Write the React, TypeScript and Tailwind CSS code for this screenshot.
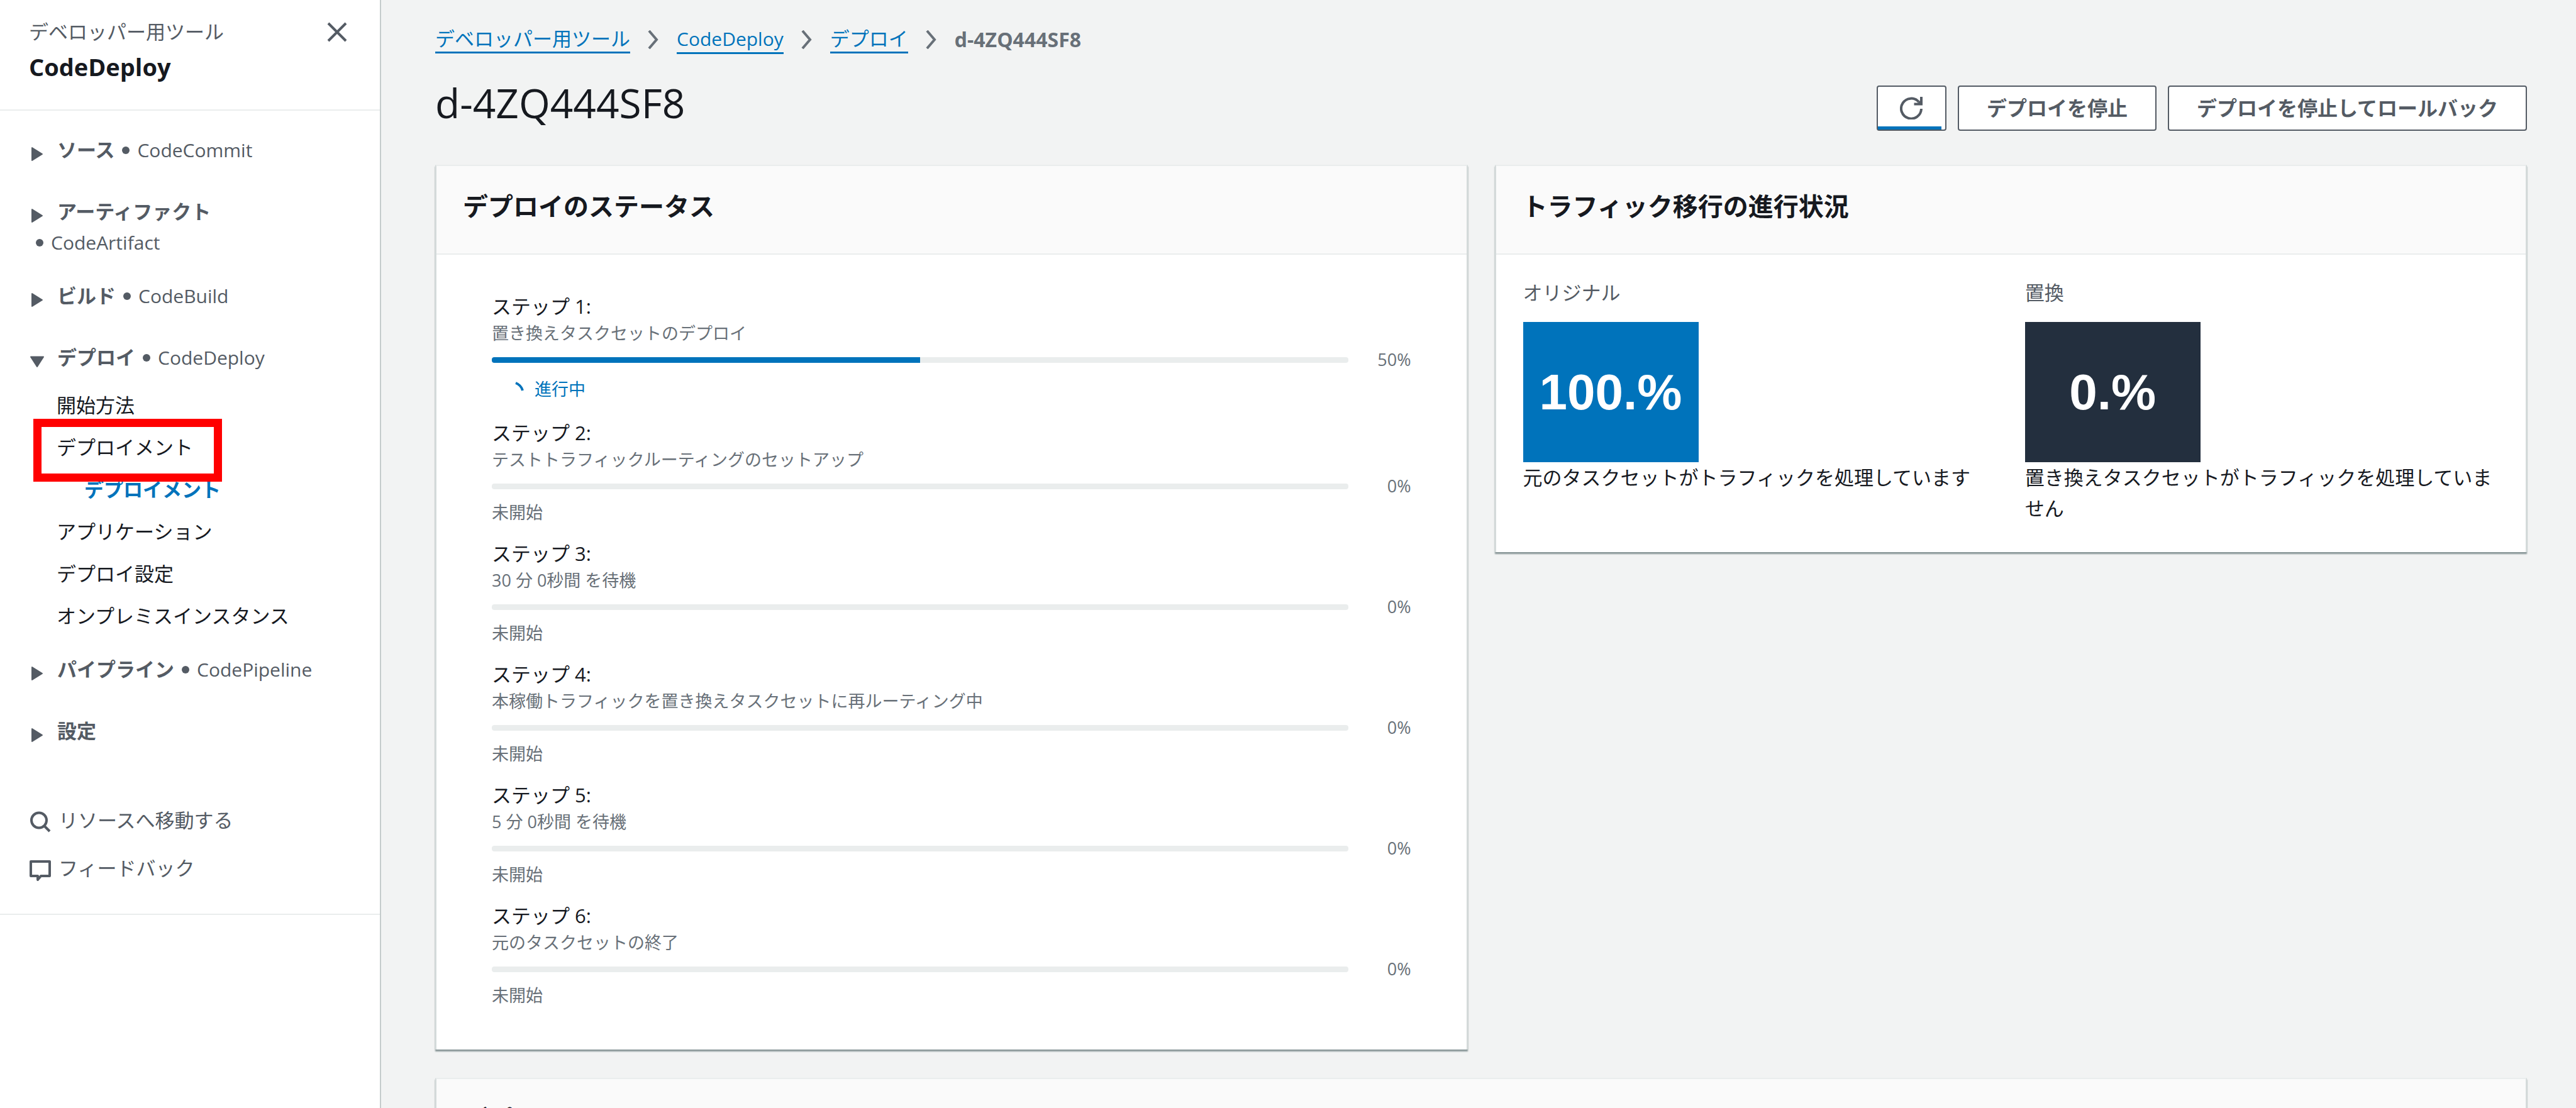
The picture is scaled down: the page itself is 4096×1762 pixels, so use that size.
import React from 'react';

function Caret({ open }: { open?: boolean }) {
  return (
    <svg viewBox="0 0 24 24" className="mt-3 h-6 w-6 shrink-0" fill="#545b64" stroke="#545b64" strokeWidth="2" strokeLinejoin="round" aria-hidden="true">
      {open ? <path d="M2 4.500h20L12 20z" /> : <path d="M4 2v20l16-10z" />}
    </svg>
  );
}

function Group({ label, service, open }: { label: string; service?: string; open?: boolean }) {
  return (
    <button type="button" className="flex h-[49px] items-center text-left">
      <Caret open={open} />
      <span className="ml-5 text-[31px] font-bold">{label}</span>
      {service && (
        <>
          <Dot />
          <span className="text-[30px]">{service}</span>
        </>
      )}
    </button>
  );
}

function Dot() {
  return <span className="mx-3 h-3 w-3 rounded-full bg-[#545b64]" />;
}

const links = [
  { label: '開始方法' },
  { label: 'デプロイメント', marked: true },
  { label: 'デプロイメント', current: true },
  { label: 'アプリケーション' },
  { label: 'デプロイ設定' },
  { label: 'オンプレミスインスタンス' },
];

function Sidebar() {
  return (
    <aside className="w-[606px] shrink-0 border-r-2 border-[#c5cccc] bg-white text-[#545b64]">
      <header className="flex h-[176px] items-start justify-between border-b-2 border-[#eaeded] pl-[46px] pr-[52px] pt-[26px]">
        <div>
          <p className="text-[31px] leading-[49px]">デベロッパー用ツール</p>
          <h2 className="mt-1 text-[38px] font-bold leading-[54px] text-[#16191f]">CodeDeploy</h2>
        </div>
        <button type="button" aria-label="閉じる" className="mt-[9px]">
          <svg viewBox="0 0 32 32" className="h-8 w-8" fill="none" stroke="#545b64" strokeWidth="4" aria-hidden="true">
            <path d="M2 2l28 28M30 2L2 30" />
          </svg>
        </button>
      </header>
      <nav className="border-b-2 border-[#eaeded] pb-12 pl-[47px] pt-[38px] leading-[49px]">
        <Group label="ソース" service="CodeCommit" />
        <div className="mt-[49px]">
          <Group label="アーティファクト" />
          <div className="-ml-0.5 flex items-center">
            <Dot />
            <span className="text-[30px]">CodeArtifact</span>
          </div>
        </div>
        <div className="mt-9">
          <Group label="ビルド" service="CodeBuild" />
        </div>
        <div className="mt-[49px]">
          <Group label="デプロイ" service="CodeDeploy" open />
        </div>
        <ul className="mb-[27px] mt-[18px] text-[31px] text-[#16191f]">
          {links.map((link, i) => (
            <li key={i} className={link.current ? 'relative ml-[87px] h-[67px] py-[9px]' : 'relative ml-[43px] h-[67px] py-[9px]'}>
              <a href="#" className={link.current ? 'font-bold text-[#0073bb]' : ''}>{link.label}</a>
              {link.marked && (
                <span className="absolute -left-[37px] -top-[12px] z-10 h-[100px] w-[300px] border-[13px] border-[#ff0000]" />
              )}
            </li>
          ))}
        </ul>
        <Group label="パイプライン" service="CodePipeline" />
        <div className="mt-[49px]">
          <Group label="設定" />
        </div>
        <button type="button" className="mt-[93px] flex items-center gap-3 text-[31px]">
          <svg viewBox="0 0 34 34" className="mt-1 h-[34px] w-[34px]" fill="none" stroke="#545b64" strokeWidth="4" aria-hidden="true">
            <circle cx="15" cy="14.500" r="12" />
            <path d="M23 23l9 9" />
          </svg>
          リソースへ移動する
        </button>
        <button type="button" className="mt-[27px] flex items-center gap-3 text-[31px]">
          <svg viewBox="0 0 34 34" className="mt-2 h-[34px] w-[34px]" fill="none" stroke="#545b64" strokeWidth="4" strokeLinejoin="round" aria-hidden="true">
            <path d="M2 2h30v23H18l-5 6v-6H2z" />
          </svg>
          フィードバック
        </button>
      </nav>
    </aside>
  );
}

function Chevron() {
  return (
    <svg viewBox="0 0 20 30" className="mx-[27px] h-[30px] w-5" fill="none" stroke="#687078" strokeWidth="4" aria-hidden="true">
      <path d="M3 1l12 14L3 29" />
    </svg>
  );
}

function Crumb({ children }: { children: React.ReactNode }) {
  return (
    <a href="#" className="border-b-3 border-[#0073bb] leading-[42px] text-[#0073bb]">
      {children}
    </a>
  );
}

function Card({ title, className, children }: { title: string; className?: string; children?: React.ReactNode }) {
  return (
    <section className={'border-x-2 border-t-2 border-x-[#d5dbdb] border-t-[#eaeded] bg-white shadow-[0_3px_2px_#879596] ' + (className ?? '')}>
      <header className="h-[141px] border-b-2 border-[#eaeded] bg-[#fafafa] px-[42px] pt-[39px]">
        <h2 className="text-[40px] font-bold leading-[50px]">{title}</h2>
      </header>
      {children}
    </section>
  );
}

const steps = [
  { title: 'ステップ 1:', text: '置き換えタスクセットのデプロイ', value: 50 },
  { title: 'ステップ 2:', text: 'テストトラフィックルーティングのセットアップ', value: 0 },
  { title: 'ステップ 3:', text: '30 分 0秒間 を待機', value: 0 },
  { title: 'ステップ 4:', text: '本稼働トラフィックを置き換えタスクセットに再ルーティング中', value: 0 },
  { title: 'ステップ 5:', text: '5 分 0秒間 を待機', value: 0 },
  { title: 'ステップ 6:', text: '元のタスクセットの終了', value: 0 },
];

function Step({ title, text, value }: { title: string; text: string; value: number }) {
  return (
    <li className="text-[27px] leading-9 text-[#687078]">
      <h3 className="text-[31px] leading-[49px] text-[#16191f]">{title}</h3>
      <p>{text}</p>
      <div className="my-1.5 flex items-center">
        <div role="progressbar" aria-label={title} aria-valuenow={value} className="h-[9px] flex-1 overflow-hidden rounded-[4px] bg-[#eaeded]">
          <div className="h-full bg-[#0073bb]" style={{ width: `${value}%` }} />
        </div>
        <span className="w-[100px] text-right">{value}%</span>
      </div>
      {value > 0 ? (
        <p className="flex items-center pl-[17px] leading-[45px] text-[#0073bb]">
          <svg viewBox="0 0 36 36" className="mr-[15px] h-9 w-9" fill="none" stroke="#0073bb" strokeWidth="4" aria-hidden="true">
            <path d="M21 8a18 18 0 0 1 11 12" />
          </svg>
          進行中
        </p>
      ) : (
        <p>未開始</p>
      )}
    </li>
  );
}

function Traffic({ label, value, tone, text }: { label: string; value: string; tone: string; text: string }) {
  return (
    <div className="text-[31px] leading-[49px]">
      <h3 className="text-[#545b64]">{label}</h3>
      <div className={'mt-[22px] flex h-[223px] w-[279px] items-center justify-center font-["Liberation_Sans",sans-serif] text-[80px] font-bold text-white ' + tone}>
        {value}
      </div>
      <p>{text}</p>
    </div>
  );
}

const button = 'flex h-[72px] items-center justify-center rounded-[4px] border-2 border-[#545b64] bg-white px-11 text-[32px] font-bold text-[#545b64]';

export default function App() {
  return (
    <div lang="ja" className='flex h-screen overflow-hidden bg-[#f2f3f3] font-["Open_Sans","Noto_Sans_CJK_JP",sans-serif] text-[#16191f]'>
      <Sidebar />
      <main className="min-w-0 flex-1 pl-[86px] pr-[78px] pt-10">
        <nav aria-label="パンくずリスト" className="flex h-[45px] items-center text-[31px]">
          <Crumb>デベロッパー用ツール</Crumb>
          <Chevron />
          <Crumb><span className="text-[30px]">CodeDeploy</span></Crumb>
          <Chevron />
          <Crumb>デプロイ</Crumb>
          <Chevron />
          <span className="text-[32px] font-bold text-[#687078]">d-4ZQ444SF8</span>
        </nav>
        <div className="mt-[37px] flex h-[86px] items-end justify-between">
          <h1 className="self-start text-[64px] leading-[84px]">d-4ZQ444SF8</h1>
          <div className="flex gap-[18px]">
            <button type="button" aria-label="更新" className="flex h-[72px] w-[111px] flex-col items-center justify-between rounded-[4px] border-2 border-[#545b64] bg-white pt-4">
              <svg viewBox="0 0 36 36" className="h-9 w-9" fill="none" stroke="#545b64" strokeWidth="4" aria-hidden="true">
                <path d="M34 19A16 16 0 1 1 30 8" />
                <path d="M34 0v11.500H22.500" />
                <path d="M34 4v8h-8z" fill="#545b64" stroke="none" />
              </svg>
              <span className="h-[5px] w-[101px] self-start bg-[#0073bb]" />
            </button>
            <button type="button" className={button}>デプロイを停止</button>
            <button type="button" className={button}>デプロイを停止してロールバック</button>
          </div>
        </div>
        <div className="mt-[54px] grid grid-cols-2 items-start gap-[43px]">
          <Card title="デプロイのステータス">
            <ol className="flex flex-col gap-[23px] px-[88px] pb-[68px] pt-[58px]">
              {steps.map((step) => (
                <Step key={step.title} {...step} />
              ))}
            </ol>
          </Card>
          <Card title="トラフィック移行の進行状況">
            <div className="grid grid-cols-2 gap-[45px] px-[43px] pb-[45px] pt-9">
              <Traffic label="オリジナル" value="100.%" tone="bg-[#0073bb]" text="元のタスクセットがトラフィックを処理しています" />
              <Traffic label="置換" value="0.%" tone="bg-[#232f3e]" text="置き換えタスクセットがトラフィックを処理していません" />
            </div>
          </Card>
        </div>
        <Card title="デプロイメント" className="mt-[45px]" />
      </main>
    </div>
  );
}
